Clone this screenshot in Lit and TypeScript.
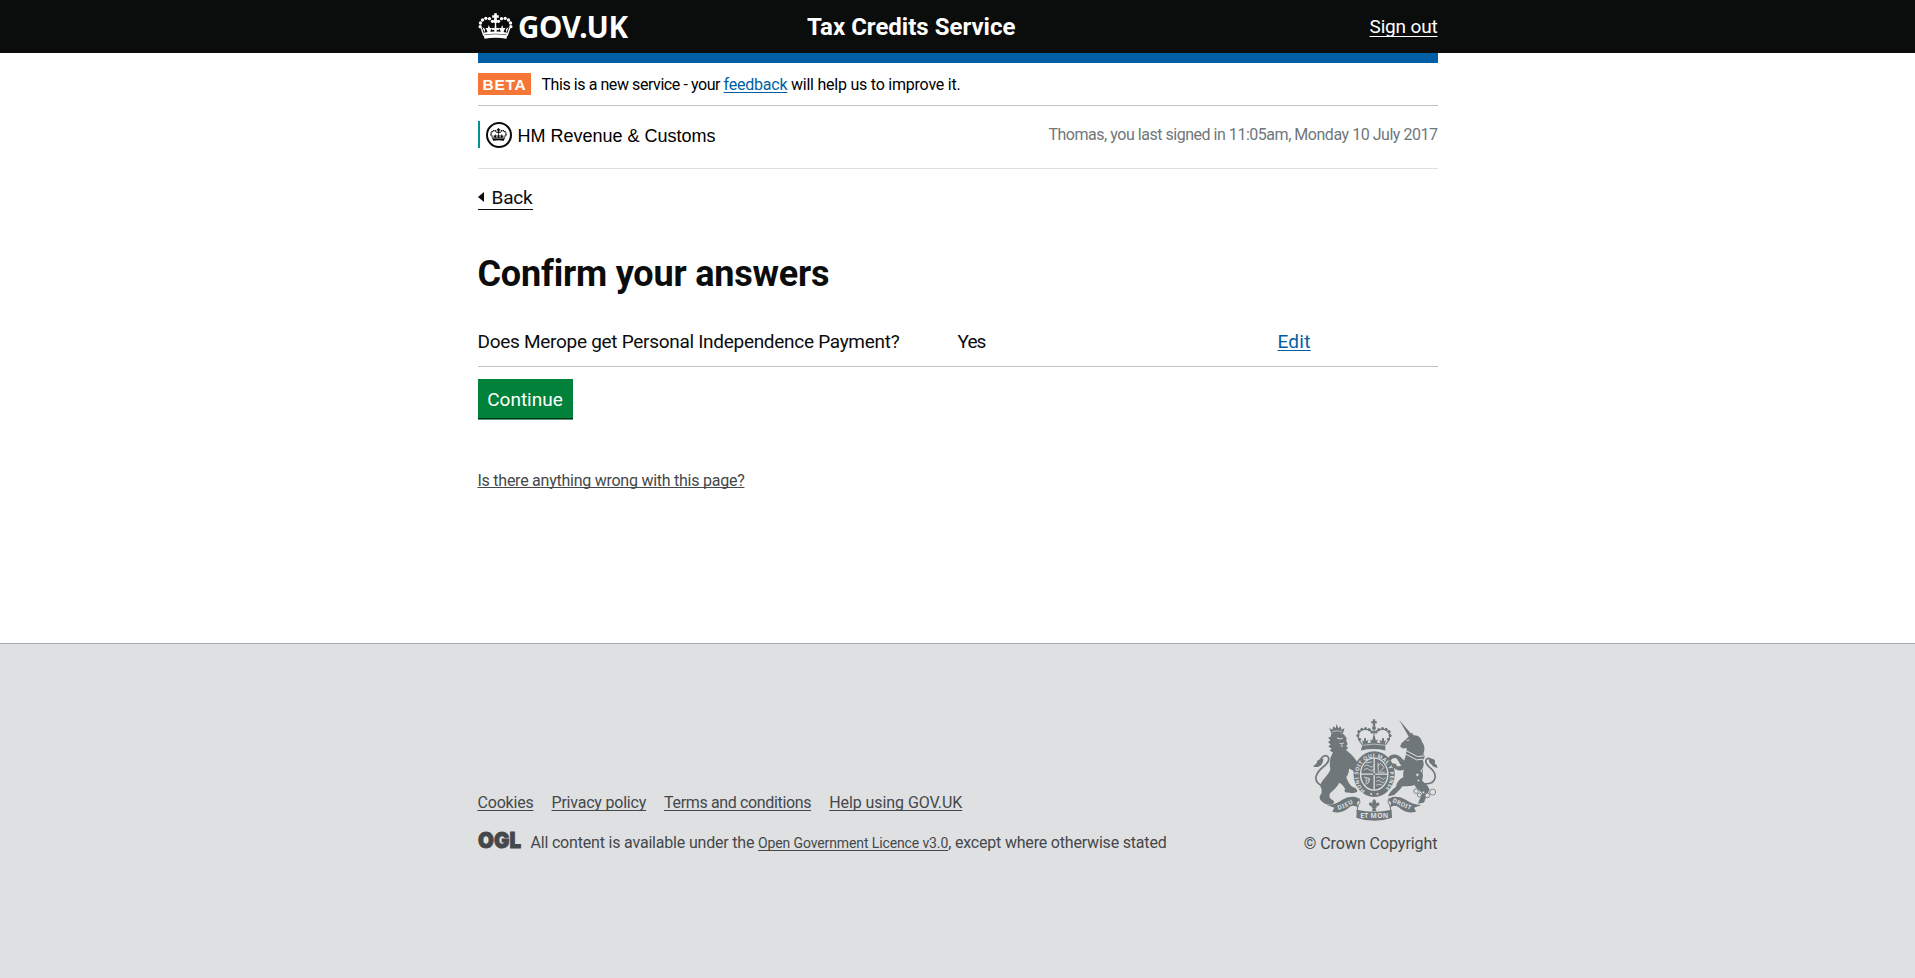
import { LitElement, html, css, svg } from "lit";
import { customElement } from "lit/decorators.js";

// Beaded arch crown on a 104 x 78 grid; used in the masthead and the department badge.
const beads: [number, number][] = [
  [6, 41], [7, 30], [13, 21], [23, 16], [34, 17], [43, 25],
];

@customElement("gov-crown")
class GovCrown extends LitElement {
  static styles = css`
    :host { display: block; }
    svg { display: block; width: 100%; height: 100%; }
  `;
  render() {
    return html`<svg viewBox="0 0 104 78" fill="currentColor" aria-hidden="true">
      ${beads.map(([x, y]) => svg`<circle cx=${x} cy=${y} r="5"/><circle cx=${104 - x} cy=${y} r="5"/>`)}
      <path d="M48 1h8v6h6v7h-6v7h-8v-7h-6v-7h6z"/>
      <circle cx="52" cy="25" r="6"/>
      <path d="M9 44L17 68M95 44L87 68M52 28V40" fill="none" stroke="currentColor" stroke-width="4"/>
      <path d="M50 38h4l1 8 7-2v8l-6-2-1 8h-6l-1-8-6 2v-8l7 2z"/>
      <path d="M32 36l3 9 7 0-4 7-3 7h-6l-3-7-4-7 7 0zM72 36l-3 9-7 0 4 7 3 7h6l3-7 4-7-7 0z"/>
      <path d="M13 42l8 7-2 10zM91 42l-8 7 2 10z"/>
      <path d="M16 59q36-7 72 0l-1 6q-35-6-70 0z"/>
      <path d="M17 67q35-6 70 0l-2 10q-33-5-66 0z"/>
    </svg>`;
  }
}

const dots = [[164, 72], [159, 61], [162, 49], [171, 42], [182, 40], [193, 43], [201, 50]];
const links = [[334, 228, 7], [344, 240, 6], [356, 232, 4], [368, 241, 7], [384, 231, 9], [338, 179, 5], [350, 167, 4], [341, 196, 4]];

@customElement("royal-arms")
class RoyalArms extends LitElement {
  static styles = css`
    :host { display: block; width: 125px; height: 102px; color: #6f777b; }
    svg { display: block; width: 100%; height: 100%; }
    text { font-family: "Noto Sans", sans-serif; font-weight: 700; fill: #dee0e2; }
  `;
  render() {
    return html`<svg viewBox="24 11 376 307" fill="currentColor" role="img" aria-label="Royal coat of arms">
      <!-- lion -->
      <path d="M79 55l-6-17 9 5 3-10 7 6 3-13 5 13 7-6 3 10 9-5-5 17z"/>
      <path d="M82 49q15-5 29 0" fill="none" stroke="#dee0e2" stroke-width="2"/>
      <path d="M78 56C90 51 106 51 117 58L125 68L124 76L128 86L124 93L130 98L123 104C136 114 150 126 160 146L152 176L144 166L132 160C133 170 130 178 124 186C128 198 134 208 142 215C152 218 158 222 157 230C148 235 138 234 130 232C120 234 116 228 121 222C116 213 110 206 103 203C98 214 86 226 76 234C71 241 73 248 80 253C88 256 90 263 83 267C70 271 58 267 51 259C42 253 42 243 49 236L50 226C50 218 44 214 46 208C54 190 72 178 76 162C72 142 76 124 84 112L74 106L80 100L70 94L77 88L69 80L76 76L70 67L78 64Z"/>
      <path d="M96 68l9 3 8-2M104 84q7 5 13-1M108 92l6 1" fill="none" stroke="#dee0e2" stroke-width="3"/>
      <path d="M52 212Q30 204 33 184Q38 168 56 154Q76 138 70 126Q62 116 52 126Q44 134 42 144" fill="none" stroke="currentColor" stroke-width="5"/>
      <path d="M24 153Q36 148 37 136L55 130Q54 150 42 154Q34 158 24 153z"/>
      <!-- unicorn -->
      <path d="M283 13L323 60L313 66z"/>
      <path d="M322 52L326 60C340 58 350 68 352 80C362 92 360 106 356 116C362 124 360 130 354 134C360 146 356 158 350 166C358 178 354 188 352 196C362 206 374 214 374 224C370 236 364 246 358 262L340 266C344 252 352 242 352 234C344 226 334 222 330 210C316 216 300 212 292 214C286 224 276 232 268 240L250 244C254 230 266 222 274 214C276 200 286 190 296 186C294 176 296 170 298 164C288 168 276 166 270 160L258 154L262 144L272 146L278 154L290 152C284 144 280 136 276 130C268 126 262 130 256 138L248 132C252 122 260 116 274 118C286 122 292 130 298 136C304 124 304 112 306 98L294 100L286 94L290 84L304 72L314 62Z"/>
      <path d="M306 76l8-2M300 104L338 124L358 122M296 113L336 134L355 132" fill="none" stroke="#dee0e2" stroke-width="3"/>
      <path d="M360 206Q390 208 392 184Q390 168 374 156Q358 140 366 132Q376 124 386 142" fill="none" stroke="currentColor" stroke-width="5"/>
      <path d="M374 130Q396 130 390 145Q398 148 399 158Q386 157 380 147Q370 142 374 130z"/>
      ${links.map(([x, y, r]) => svg`<circle cx=${x} cy=${y} r=${r} fill="#dee0e2" stroke="currentColor" stroke-width="2.5"/>`)}
      <!-- crown -->
      <path d="M204 12h7v6h5v6h-5v8h-7v-8h-5v-6h5z"/>
      <circle cx="207.5" cy="38" r="6"/>
      <path d="M172 88Q157 70 160 57Q169 38 191 43L207 52L224 43Q245 38 254 57Q258 70 243 88M207.5 43V71" fill="none" stroke="currentColor" stroke-width="3.5"/>
      ${dots.map(([x, y]) => svg`<circle cx=${x} cy=${y} r="4.6"/><circle cx=${415 - x} cy=${y} r="4.6"/>`)}
      <path d="M174 84l-3-9 6 3 1-10h5l1 9 7-3-3 10 11-2-4-9 7 3 3-13h5l3 13 7-3-4 9 11 2-3-10 7 3 1-9h5l1 10 6-3-3 9 1 22q-36-9-74 0z"/>
      <path d="M175 90q32-7 65 0" fill="none" stroke="#dee0e2" stroke-width="2"/>
      <!-- garter -->
      <ellipse cx="208" cy="177" rx="62" ry="69"/>
      <ellipse cx="208" cy="177" rx="43" ry="50" fill="#dee0e2"/>
      <path id="garter" d="M181 227A48 55 0 1 1 235 227" fill="none"/>
      <text font-size="16"><textPath href="#garter" textLength="256">HONI SOIT QUI MAL Y PENSE</textPath></text>
      <!-- quartered shield -->
      <ellipse cx="208" cy="177" rx="39" ry="46"/>
      <path d="M208 130V224M168 177H248" stroke="#dee0e2" stroke-width="4"/>
      <path d="M178 153q8-8 16 0t11-2M177 164q9-8 17 0t11-3M184 143l18-3M220 142v29h20M218 152l10-7 10 12-12 10M177 186l17 4q0 16-12 17M184 188v17M190 189v12M214 188q9-7 15 1t13-1M214 199q9-7 15 1t10-1M214 211q8-7 18-1" fill="none" stroke="#dee0e2" stroke-width="2.4"/>
      <circle cx="208" cy="177" r="3.5"/>
      <circle cx="199" cy="237" r="3" fill="#dee0e2"/><circle cx="218" cy="237" r="3" fill="#dee0e2"/>
      <!-- motto ribbon -->
      <path d="M66 270Q94 268 112 254Q130 242 152 246L166 252L156 264L160 278Q146 268 134 276Q112 298 82 290L88 278z"/>
      <path d="M350 270Q322 268 303 254Q285 242 263 246L249 252L259 264L255 278Q269 268 281 276Q303 298 334 290L328 278z"/>
      <path d="M156 284q52 13 104 0l2 24q-54 19-108 0z"/>
      <path d="M164 254Q168 262 160 270L156 290M251 254Q247 262 255 270L259 290" fill="none" stroke="currentColor" stroke-width="3"/>
      <path id="dieu" d="M100 285Q122 279 148 262" fill="none"/>
      <path id="droit" d="M262 260Q288 273 322 287" fill="none"/>
      <text font-size="18"><textPath href="#dieu" textLength="50">DIEU</textPath></text>
      <text font-size="18"><textPath href="#droit" textLength="60">DROIT</textPath></text>
      <text font-size="20" x="166" y="310" textLength="84">ET MON</text>
      <path d="M208 252q10 8 3 17 3-9 12-6 3 9-8 11v5h-3l3 10h-14l3-10h-3v-5q-11-2-8-11 9-3 12 6-7-9 3-17z"/>
    </svg>`;
  }
}

@customElement("app-root")
class AppRoot extends LitElement {
  static styles = css`
    :host {
      display: flex; flex-direction: column; height: 978px; overflow: hidden;
      background: #fff; color: #0b0c0c;
      font-family: Roboto, "Noto Sans", sans-serif; font-size: 16px; line-height: 20px;
    }
    * { box-sizing: border-box; }
    a { color: #005ea5; text-decoration: underline; text-decoration-thickness: 1px; text-underline-offset: 2px; text-decoration-skip-ink: none; }
    .wrap { width: 960px; margin: 0 auto; }
    .masthead { background: #0b0c0c; color: #fff; }
    .mast { height: 53px; display: grid; grid-template-columns: 329.5px 1fr auto; align-items: center; }
    .brand { display: flex; align-items: center; gap: 5.5px; font: 700 29.5px/34px "Noto Sans", sans-serif; letter-spacing: -0.3px; }
    .brand span { padding-top: 1px; }
    .brand gov-crown { width: 35px; height: 26px; margin-bottom: 2px; }
    .service { font-size: 24px; line-height: 30px; font-weight: 700; }
    .signout { color: #fff; font-size: 19px; line-height: 24px; letter-spacing: -0.17px; text-underline-offset: 3px; }
    .bar { height: 10px; background: #005ea5; }
    .phase { height: 43px; border-bottom: 1px solid #bfc1c3; display: flex; align-items: center; gap: 11px; color: #000; }
    .lead { letter-spacing: -0.43px; }
    .tail { letter-spacing: -0.23px; }
    .note { padding-top: 2px; }
    .tag { height: 22px; width: 53px; padding-left: 1px; text-align: center; background: #f47738; color: #fff; font: 700 15.5px/23px "Liberation Sans", Arial, sans-serif; letter-spacing: 0.7px; }
    .dept { height: 63px; border-bottom: 1px solid #dee0e2; padding: 15px 0 20px; display: flex; justify-content: space-between; align-items: center; }
    .org { height: 27px; border-left: 2px solid #009390; padding-left: 6px; display: flex; align-items: center; gap: 6px; font: 18px/22px "Liberation Sans", Arial, sans-serif; color: #000; }
    .org span { padding-top: 2px; }
    .badge { width: 26px; height: 26px; border: 2px solid #0b0c0c; border-radius: 50%; display: grid; place-items: center; }
    .badge gov-crown { width: 17px; height: 15px; margin-bottom: 1px; }
    .last { color: #6f777b; letter-spacing: -0.47px; padding-top: 1px; }
    .back { margin-top: 18px; width: 55px; height: 23px; border-bottom: 1px solid #0b0c0c; display: flex; align-items: center; gap: 8px; font-size: 19px; letter-spacing: -0.17px; color: #0b0c0c; text-decoration: none; }
    .back svg { width: 6px; height: 10px; margin-bottom: 2px; flex: none; }
    h1 { margin: 44px 0 23px; font-size: 36px; line-height: 40px; font-weight: 700; letter-spacing: -0.2px; }
    .row { height: 50px; border-bottom: 1px solid #bfc1c3; display: grid; grid-template-columns: 480px 320px 160px; align-items: center; font-size: 19px; line-height: 24px; letter-spacing: -0.29px; }
    .row .yes { letter-spacing: -0.9px; }
    .row .edit { letter-spacing: 0.25px; }
    .go { display: block; margin-top: 12px; width: 95px; height: 39px; padding: 3px 0 0; border: 0; background: #00823b; color: #fff; font: 19px/24px Roboto, "Noto Sans", sans-serif; box-shadow: 0 1px #003618, 0 2px #5a9273; }
    .wrong { display: inline-block; margin-top: 53px; color: #45484a; letter-spacing: -0.25px; text-underline-offset: 1px; }
    main { height: 590px; }
    footer { flex: 1; border-top: 1px solid #a1acb2; background: #dee0e2; color: #45484a; padding-top: 75px; }
    footer a { color: #45484a; }
    .foot { display: flex; justify-content: space-between; align-items: flex-end; }
    .links { display: flex; gap: 18px; margin-bottom: 18px; }
    .cookies { letter-spacing: -0.2px; }
    .privacy { letter-spacing: -0.21px; }
    .terms { letter-spacing: -0.35px; }
    .help { letter-spacing: -0.07px; }
    .licence { display: flex; align-items: center; gap: 9px; letter-spacing: -0.19px; }
    .licence svg { width: 44px; height: 20px; margin-bottom: 3px; overflow: visible; flex: none; }
    .ogl { font: 900 22px Inter, sans-serif; letter-spacing: 0; }
    .licence a { font-size: 14px; letter-spacing: -0.12px; }
    .copy { display: flex; flex-direction: column; align-items: flex-end; gap: 13px; letter-spacing: -0.05px; }
  `;
  render() {
    return html`
      <header class="masthead">
        <div class="wrap mast">
          <div class="brand"><gov-crown></gov-crown><span>GOV.UK</span></div>
          <div class="service">Tax Credits Service</div>
          <a class="signout">Sign out</a>
        </div>
      </header>
      <main class="wrap">
        <div class="bar"></div>
        <div class="phase"><span class="tag">BETA</span><span class="note"><span class="lead">This is a new service - your </span><span class="tail"><a>feedback</a> will help us to improve it.</span></span></div>
        <div class="dept">
          <div class="org"><div class="badge"><gov-crown></gov-crown></div><span>HM Revenue &amp; Customs</span></div>
          <div class="last">Thomas, you last signed in 11:05am, Monday 10 July 2017</div>
        </div>
        <a class="back"><svg viewBox="0 0 6 10"><path d="M6 0v10L0 5z" fill="#0b0c0c"/></svg>Back</a>
        <h1>Confirm your answers</h1>
        <div class="row"><span>Does Merope get Personal Independence Payment?</span><span class="yes">Yes</span><span><a class="edit">Edit</a></span></div>
        <button class="go">Continue</button>
        <a class="wrong">Is there anything wrong with this page?</a>
      </main>
      <footer>
        <div class="wrap foot">
          <div>
            <nav class="links"><a class="cookies">Cookies</a><a class="privacy">Privacy policy</a><a class="terms">Terms and conditions</a><a class="help">Help using GOV.UK</a></nav>
            <div class="licence">
              <svg viewBox="0 0 44 20"><text class="ogl" x="0" y="17" textLength="43" lengthAdjust="spacingAndGlyphs" fill="#45484a" stroke="#45484a" stroke-width="0.9">OGL</text></svg>
              <span>All content is available under the <a>Open Government Licence v3.0</a>, except where otherwise stated</span>
            </div>
          </div>
          <div class="copy"><royal-arms></royal-arms><span>© Crown Copyright</span></div>
        </div>
      </footer>`;
  }
}
